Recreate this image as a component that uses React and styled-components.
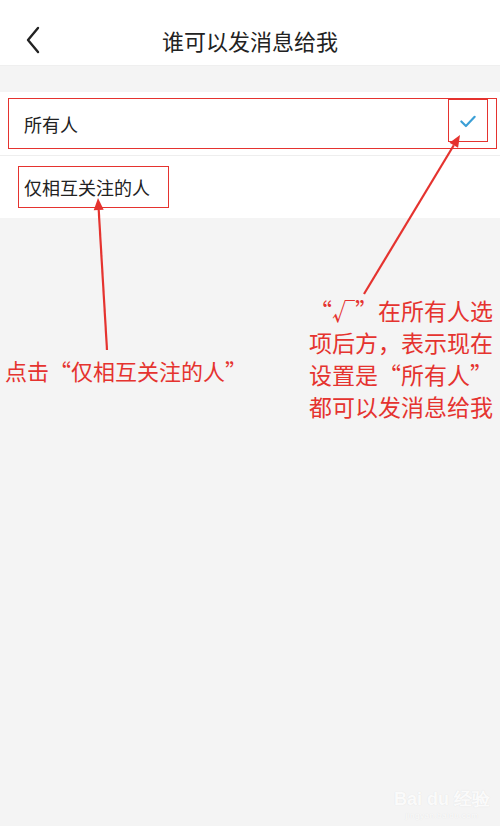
import React from "react";
import styled, { createGlobalStyle } from "styled-components";

const Global = createGlobalStyle`
  html, body {
    margin: 0;
    padding: 0;
    background: #f4f4f4;
  }
  body {
    font-family: "Noto Sans CJK SC", "Noto Sans", sans-serif;
  }
`;

const ROJO = "#e5332f";

const Pagina = styled.div`
  position: relative;
  width: 500px;
  height: 826px;
  background: #f4f4f4;
  overflow: hidden;
`;

const Cabecera = styled.header`
  height: 66px;
  padding-top: 14px;
  box-sizing: border-box;
  background: #fff;
  display: grid;
  grid-template-columns: 66px 1fr 66px;
  align-items: center;
  border-bottom: 1px solid #efefef;
`;

const Volver = styled.div`
  display: flex;
  padding-left: 24px;
  svg {
    width: 18px;
    height: 28px;
  }
`;

const Titulo = styled.h1`
  margin: 0;
  text-align: center;
  font-size: 22px;
  font-weight: 400;
  color: #222;
`;

const Lista = styled.div`
  margin-top: 26px;
  background: #fff;
  display: flex;
  flex-direction: column;
`;

const Opcion = styled.div`
  height: 63px;
  box-sizing: border-box;
  display: flex;
  align-items: stretch;
  padding: ${(p) => p.$pad};
  border-top: ${(p) => (p.$first ? "none" : "1px solid #eeeeee")};
`;

// recuadros rojos de la anotación
const Marco = styled.div`
  flex: ${(p) => (p.$grow ? 1 : "none")};
  display: flex;
  align-items: center;
  justify-content: space-between;
  border: 1.5px solid ${ROJO};
  padding: ${(p) => p.$pad || "0"};
  font-size: 18px;
  color: #222;
`;

const CajaCheck = styled.div`
  width: 40px;
  height: 43px;
  box-sizing: border-box;
  align-self: flex-start;
  margin: 0 8px 0 0;
  border: 1.5px solid ${ROJO};
  display: flex;
  align-items: center;
  justify-content: center;
  svg {
    width: 20px;
    height: 20px;
  }
`;

const Capa = styled.svg`
  position: absolute;
  left: 0;
  top: 0;
  pointer-events: none;
`;

const Nota = styled.p`
  position: absolute;
  margin: 0;
  color: ${ROJO};
  font-size: ${(p) => p.$size || 22}px;
  font-weight: 400;
  line-height: 32px;
  text-align: ${(p) => p.$align || "left"};
  white-space: nowrap;
`;

const Marca = styled.div`
  position: absolute;
  right: 10px;
  bottom: 6px;
  color: rgba(255, 255, 255, 0.9);
  text-align: center;
  font-family: "Liberation Sans", sans-serif;
  text-shadow: 0 0 1px #dcdcdc;
  b {
    font-size: 18px;
    font-weight: 700;
  }
  span {
    display: block;
    font-size: 8px;
    letter-spacing: 0.5px;
  }
`;

const Flecha = ({ x1, y1, x2, y2 }) => {
  const ang = Math.atan2(y2 - y1, x2 - x1);
  const len = 12;
  const w = 5;
  const bx = x2 - len * Math.cos(ang);
  const by = y2 - len * Math.sin(ang);
  const px = -Math.sin(ang) * w;
  const py = Math.cos(ang) * w;
  return (
    <g>
      <line x1={x1} y1={y1} x2={bx} y2={by} stroke={ROJO} strokeWidth="2.2" />
      <polygon
        points={`${x2},${y2} ${bx + px},${by + py} ${bx - px},${by - py}`}
        fill={ROJO}
      />
    </g>
  );
};

export default function App() {
  return (
    <Pagina>
      <Global />
      <Cabecera>
        <Volver>
          <svg viewBox="0 0 18 28" fill="none" stroke="#222" strokeWidth="2.4" strokeLinecap="round" strokeLinejoin="round">
            <path d="M14 2 L4 14 L14 26" />
          </svg>
        </Volver>
        <Titulo>谁可以发消息给我</Titulo>
        <div />
      </Cabecera>
      <Lista>
        <Opcion $first $pad="6px 3px 6px 8px">
          <Marco $grow $pad="0 0 0 15px">
            所有人
            <CajaCheck>
              <svg viewBox="0 0 24 24" fill="none" stroke="#3b9fd6" strokeWidth="2.6" strokeLinecap="round" strokeLinejoin="round">
                <path d="M4 12.5 L9.5 18 L20 7" />
              </svg>
            </CajaCheck>
          </Marco>
        </Opcion>
        <Opcion $pad="10px 0 10px 18px">
          <Marco $pad="0 18px 0 5px">仅相互关注的人</Marco>
        </Opcion>
      </Lista>

      <Capa width="500" height="826">
        <Flecha x1={107} y1={350} x2={98} y2={198} />
        <Flecha x1={364} y1={294} x2={460} y2={135} />
      </Capa>

      <Nota style={{ left: 5, top: 354 }}>点击“仅相互关注的人”</Nota>
      <Nota $size={23} $align="center" style={{ left: 303, top: 294, width: 196 }}>
        “√”在所有人选
        <br />
        项后方，表示现在
        <br />
        设置是“所有人”
        <br />
        都可以发消息给我
      </Nota>

      <Marca>
        <b>Bai du 经验</b>
        <span>jingyan.baidu.com</span>
      </Marca>
    </Pagina>
  );
}
